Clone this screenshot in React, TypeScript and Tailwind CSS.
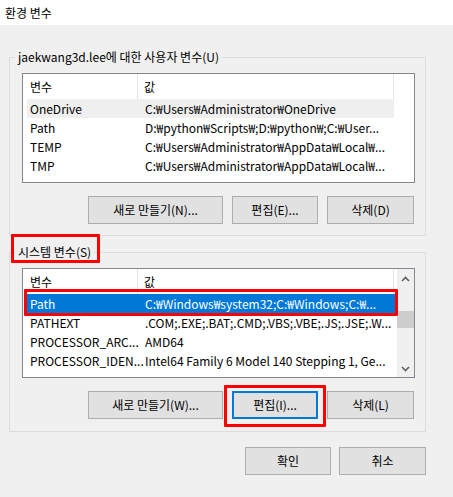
import React from "react";

type Row = [string, string];

const FONT = { fontFamily: '"Noto Sans CJK KR", "Noto Sans", sans-serif' };

function Chevron({ up }: { up?: boolean }) {
  return (
    <svg width="9" height="6" viewBox="0 0 9 6" className="block">
      <path
        d={up ? "M1 5 L4.5 1.5 L8 5" : "M1 1 L4.5 4.5 L8 1"}
        fill="none"
        stroke="#606060"
        strokeWidth="1.6"
      />
    </svg>
  );
}

function ListView({
  rows,
  hover,
  selected,
  scroll,
  annotateSelected,
}: {
  rows: Row[];
  hover?: number;
  selected?: number;
  scroll?: boolean;
  annotateSelected?: boolean;
}) {
  return (
    <div className="w-[393px] h-[110px] border border-[#828790] bg-white flex overflow-hidden">
      <div className="flex-1 pl-[4px] min-w-0">
        <div className="flex h-[25px] w-[367px]">
          <div className="w-[111px] h-full flex items-center pl-[3px] border-r border-[#e5e5e5]">변수</div>
          <div className="flex-1 h-full flex items-center pl-[6px] border-r border-[#e5e5e5]">값</div>
        </div>
        {rows.map((r, i) => {
          const sel = i === selected;
          const hov = i === hover;
          return (
            <div
              key={i}
              className={
                "relative flex h-[19px] items-center whitespace-nowrap " +
                (scroll ? "w-[368px] " : "w-[367px] ") +
                (sel ? "bg-[#0078d7] text-white " : hov ? "bg-[#efefef] " : "")
              }
            >
              <div className="w-[118px] pl-[3px] overflow-hidden">{r[0]}</div>
              <div className="flex-1 overflow-hidden">{r[1]}</div>
              {sel && annotateSelected && (
                <div className="absolute -left-[3px] -right-[3px] -top-[5px] -bottom-[3px] border-[3px] border-[#ff0000] rounded-[1px] z-10 pointer-events-none" />
              )}
            </div>
          );
        })}
      </div>
      {scroll && (
        <div className="w-[17px] h-full bg-[#f0f0f0] flex flex-col">
          <div className="h-[17px] flex items-center justify-center mt-[1px]">
            <Chevron up />
          </div>
          <div className="h-[24px]" />
          <div className="h-[17px] bg-[#cdcdcd]" />
          <div className="flex-1" />
          <div className="h-[17px] flex items-center justify-center">
            <Chevron />
          </div>
        </div>
      )}
    </div>
  );
}

function Btn({
  children,
  w,
  focused,
  annotate,
}: {
  children: React.ReactNode;
  w: string;
  focused?: boolean;
  annotate?: boolean;
}) {
  return (
    <div
      className={
        "relative h-[28px] flex items-center justify-center bg-[#e1e1e1] " +
        (focused ? "border-2 border-[#0078d7] " : "border border-[#adadad] ") +
        w
      }
    >
      {children}
      {annotate && (
        <div className="absolute -left-[10px] -right-[10px] -top-[8px] -bottom-[10px] border-[3px] border-[#ff0000] rounded-[1px] z-10 pointer-events-none" />
      )}
    </div>
  );
}

export default function App() {
  const userRows: Row[] = [
    ["OneDrive", "C:₩Users₩Administrator₩OneDrive"],
    ["Path", "D:₩python₩Scripts₩;D:₩python₩;C:₩User..."],
    ["TEMP", "C:₩Users₩Administrator₩AppData₩Local₩..."],
    ["TMP", "C:₩Users₩Administrator₩AppData₩Local₩..."],
  ];
  const sysRows: Row[] = [
    ["Path", "C:₩Windows₩system32;C:₩Windows;C:₩..."],
    ["PATHEXT", ".COM;.EXE;.BAT;.CMD;.VBS;.VBE;.JS;.JSE;.W..."],
    ["PROCESSOR_ARC...", "AMD64"],
    ["PROCESSOR_IDEN...", "Intel64 Family 6 Model 140 Stepping 1, Ge..."],
  ];

  return (
    <div className="w-[453px] h-[497px] bg-[#f0f0f0] text-[12px] text-black overflow-hidden" style={FONT}>
      <div className="h-[25px] bg-white pl-[5px] flex items-center">환경 변수</div>

      <div className="pl-[9px]">
        {/* User variables */}
        <div className="relative mt-[32px] w-[417px] h-[179px] border border-[#dcdcdc]">
          <div className="absolute left-[5px] -top-[9px] px-[3px] bg-[#f0f0f0] leading-[16px]">
            jaekwang3d.lee에 대한 사용자 변수(U)
          </div>
          <div className="pt-[15px] pl-[12px]">
            <ListView rows={userRows} hover={0} />
            <div className="mt-[13px] w-[392px] flex justify-end gap-[9px]">
              <Btn w="w-[135px]">새로 만들기(N)...</Btn>
              <Btn w="w-[86px]">편집(E)...</Btn>
              <Btn w="w-[87px]">삭제(D)</Btn>
            </div>
          </div>
        </div>

        {/* System variables */}
        <div className="relative mt-[16px] w-[417px] h-[180px] border border-[#dcdcdc]">
          <div className="absolute left-[5px] -top-[9px] px-[3px] bg-[#f0f0f0] leading-[16px]">
            시스템 변수(S)
            <div className="absolute -left-[4px] -right-[6px] -top-[10px] -bottom-[3px] border-[3px] border-[#ff0000] rounded-[1px] pointer-events-none" />
          </div>
          <div className="pt-[15px] pl-[12px]">
            <ListView rows={sysRows} selected={0} scroll annotateSelected />
            <div className="mt-[13px] w-[392px] flex justify-end gap-[9px]">
              <Btn w="w-[135px]">새로 만들기(W)...</Btn>
              <Btn w="w-[86px]" focused annotate>
                편집(I)...
              </Btn>
              <Btn w="w-[87px]">삭제(L)</Btn>
            </div>
          </div>
        </div>

        <div className="mt-[15px] w-[417px] flex justify-end gap-[8px]">
          <Btn w="w-[86px]">확인</Btn>
          <Btn w="w-[87px]">취소</Btn>
        </div>
      </div>
    </div>
  );
}
